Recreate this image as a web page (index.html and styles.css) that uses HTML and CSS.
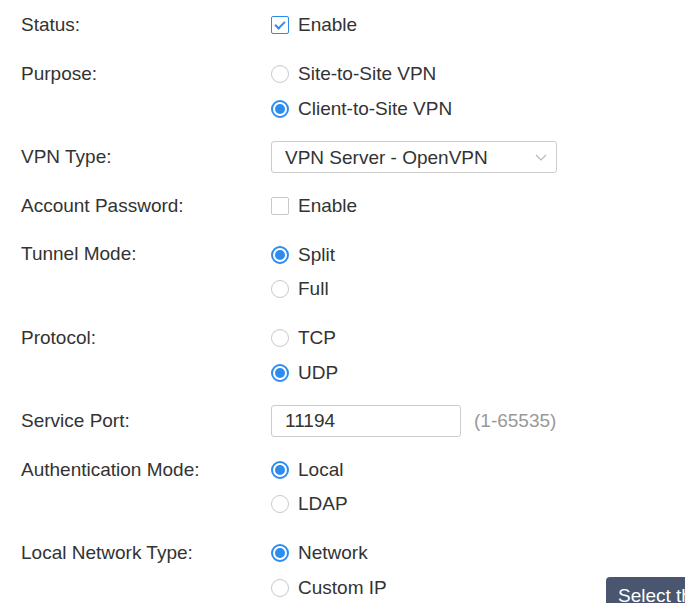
FILE: index.html
```html
<!DOCTYPE html>
<html lang="en">
<head>
    <meta charset="UTF-8">
    <meta name="viewport" content="width=device-width, initial-scale=1.0">
    <title>OpenVPN Server</title>
    <link rel="stylesheet" href="styles.css">
</head>
<body>
    <div class="vpn-form">
        <div class="form-row">
            <div class="form-label">Status:</div>
            <div class="form-control">
                <label class="option"><span class="check checked"></span>Enable</label>
            </div>
        </div>

        <div class="form-row">
            <div class="form-label">Purpose:</div>
            <div class="form-control">
                <label class="option"><span class="radio"></span>Site-to-Site VPN</label>
                <label class="option"><span class="radio selected"></span>Client-to-Site VPN</label>
            </div>
        </div>

        <div class="form-row">
            <div class="form-label">VPN Type:</div>
            <div class="form-control">
                <div class="option">
                    <div class="select-box">
                        <select class="select">
                            <option>VPN Server - OpenVPN</option>
                        </select>
                        <svg class="chevron" width="12" height="7" viewBox="0 0 12 7">
                            <path d="M1 1 L6 6 L11 1" fill="none" stroke="#b4b8bf" stroke-width="1.2"/>
                        </svg>
                    </div>
                </div>
            </div>
        </div>

        <div class="form-row">
            <div class="form-label">Account Password:</div>
            <div class="form-control">
                <label class="option"><span class="check"></span>Enable</label>
            </div>
        </div>

        <div class="form-row">
            <div class="form-label">Tunnel Mode:</div>
            <div class="form-control">
                <label class="option"><span class="radio selected"></span>Split</label>
                <label class="option"><span class="radio"></span>Full</label>
            </div>
        </div>

        <div class="form-row">
            <div class="form-label">Protocol:</div>
            <div class="form-control">
                <label class="option"><span class="radio"></span>TCP</label>
                <label class="option"><span class="radio selected"></span>UDP</label>
            </div>
        </div>

        <div class="form-row">
            <div class="form-label">Service Port:</div>
            <div class="form-control">
                <div class="option">
                    <input type="text" class="text-input" value="11194">
                    <span class="hint">(1-65535)</span>
                </div>
            </div>
        </div>

        <div class="form-row">
            <div class="form-label">Authentication Mode:</div>
            <div class="form-control">
                <label class="option"><span class="radio selected"></span>Local</label>
                <label class="option"><span class="radio"></span>LDAP</label>
            </div>
        </div>

        <div class="form-row">
            <div class="form-label">Local Network Type:</div>
            <div class="form-control">
                <label class="option"><span class="radio selected"></span>Network</label>
                <label class="option"><span class="radio"></span>Custom IP</label>
            </div>
        </div>
    </div>

    <div class="tooltip">Select the local network type</div>
</body>
</html>
```

FILE: styles.css
```css
html, body {
    overflow: hidden;
}

body {
    margin: 8px;
    font-family: "Liberation Sans", Arial, sans-serif;
    font-size: 19px;
    color: #333;
    background-color: white;
}

.vpn-form {
    padding-left: 13px;
}

.form-row {
    display: flex;
    margin-bottom: 14.1px;
}

.form-label {
    width: 250px;
    flex-shrink: 0;
    line-height: 34.6px;
}

.form-control {
    display: flex;
    flex-direction: column;
}

.option {
    display: flex;
    align-items: center;
    height: 34.6px;
}

.check,
.radio {
    box-sizing: border-box;
    width: 18px;
    height: 18px;
    border: 1px solid #c5c8ce;
    margin-right: 9px;
    flex-shrink: 0;
    position: relative;
    background-color: white;
}

.check {
    border-radius: 2px;
}

.check.checked {
    border-color: #2d8cf0;
}

.check.checked::after {
    content: "";
    position: absolute;
    left: 5px;
    top: 2px;
    width: 4px;
    height: 8px;
    border-right: 2px solid #2d8cf0;
    border-bottom: 2px solid #2d8cf0;
    transform: rotate(45deg);
}

.radio {
    border-radius: 50%;
}

.radio.selected {
    border: 2px solid #2d8cf0;
}

.radio.selected::after {
    content: "";
    position: absolute;
    left: 2px;
    top: 2px;
    width: 10px;
    height: 10px;
    border-radius: 50%;
    background-color: #2d8cf0;
}

.select-box {
    position: relative;
}

.select,
.text-input {
    box-sizing: border-box;
    height: 32px;
    border: 1px solid #ccc;
    border-radius: 3px;
    padding: 0 13px;
    font-family: inherit;
    font-size: 19px;
    color: #333;
    background-color: white;
    outline: none;
}

.select {
    width: 286px;
    appearance: none;
    -webkit-appearance: none;
}

.chevron {
    position: absolute;
    right: 10px;
    top: 13px;
}

.text-input {
    width: 190px;
}

.hint {
    margin-left: 13px;
    color: #999;
}

.tooltip {
    position: absolute;
    left: 606px;
    top: 577px;
    padding: 8px 12px;
    background-color: #4a5670;
    color: white;
    border-radius: 4px;
    white-space: nowrap;
    font-size: 19px;
}
```
